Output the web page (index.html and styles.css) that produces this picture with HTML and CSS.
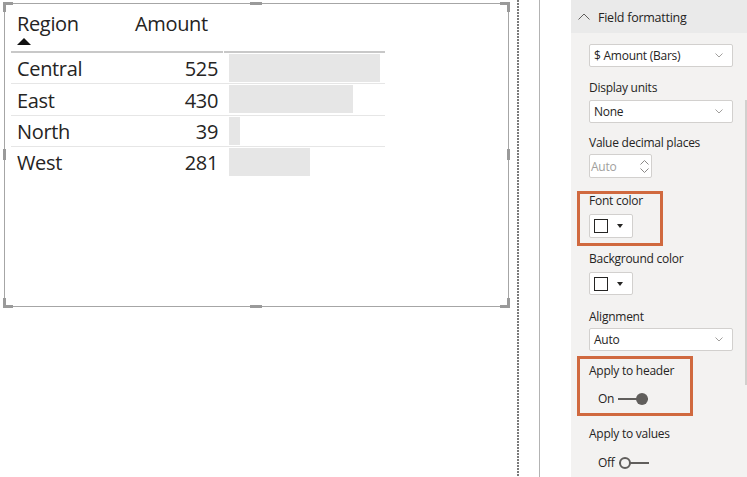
FILE: index.html
```html
<!DOCTYPE html>
<html>
<head>
<meta charset="utf-8">
<link rel="stylesheet" href="styles.css">
</head>
<body>
<div class="page">
  <div class="canvas">
    <div class="visual">
      <span class="h h-tl"></span><span class="h h-tr"></span><span class="h h-bl"></span><span class="h h-br"></span>
      <span class="m m-t"></span><span class="m m-b"></span><span class="m m-l"></span><span class="m m-r"></span>
      <div class="table">
        <div class="th c1"><span>Region</span><span class="sort"></span></div>
        <div class="th c2"><span>Amount</span></div>
        <div class="th c3"></div>

        <div class="td c1">Central</div>
        <div class="td c2">525</div>
        <div class="td c3"><div class="bar" style="width:151px"></div></div>

        <div class="td c1 tall">East</div>
        <div class="td c2 tall">430</div>
        <div class="td c3 tall"><div class="bar" style="width:124px"></div></div>

        <div class="td c1">North</div>
        <div class="td c2">39</div>
        <div class="td c3"><div class="bar" style="width:11px"></div></div>

        <div class="td c1 last">West</div>
        <div class="td c2 last">281</div>
        <div class="td c3 last"><div class="bar" style="width:81px"></div></div>
      </div>
    </div>
  </div>
  <div class="dots"></div>
  <div class="gap1"></div>
  <div class="vline"></div>
  <div class="gap2"></div>
  <div class="panel">
    <div class="phead">
      <svg class="chev-up" width="12" height="7" viewBox="0 0 12 7"><polyline points="0.5,6.5 6,1 11.5,6.5" fill="none" stroke="#605e5c" stroke-width="1"/></svg>
      <span>Field formatting</span>
    </div>
    <div class="pbody">
      <div class="select s1"><span>$ Amount (Bars)</span><svg width="8" height="5" viewBox="0 0 8 5"><polyline points="0.5,0.5 4,4 7.5,0.5" fill="none" stroke="#a19f9d" stroke-width="1"/></svg></div>
      <div class="label l1">Display units</div>
      <div class="select s2"><span>None</span><svg width="8" height="5" viewBox="0 0 8 5"><polyline points="0.5,0.5 4,4 7.5,0.5" fill="none" stroke="#a19f9d" stroke-width="1"/></svg></div>
      <div class="label l2">Value decimal places</div>
      <div class="spin"><span>Auto</span>
        <div class="arrows">
          <svg width="9" height="5" viewBox="0 0 9 5"><polyline points="0.5,4.5 4.5,0.5 8.5,4.5" fill="none" stroke="#8a8886" stroke-width="1"/></svg>
          <svg width="9" height="5" viewBox="0 0 9 5"><polyline points="0.5,0.5 4.5,4.5 8.5,0.5" fill="none" stroke="#8a8886" stroke-width="1"/></svg>
        </div>
      </div>
      <div class="label l3">Font color</div>
      <div class="picker p1"><span class="swatch"></span><span class="tri"></span></div>
      <div class="label l4">Background color</div>
      <div class="picker p2"><span class="swatch"></span><span class="tri"></span></div>
      <div class="label l5">Alignment</div>
      <div class="select s3"><span>Auto</span><svg width="8" height="5" viewBox="0 0 8 5"><polyline points="0.5,0.5 4,4 7.5,0.5" fill="none" stroke="#a19f9d" stroke-width="1"/></svg></div>
      <div class="label l6">Apply to header</div>
      <div class="toggle t1"><span>On</span><span class="track on"><span class="knob"></span></span></div>
      <div class="label l7">Apply to values</div>
      <div class="toggle t2"><span>Off</span><span class="track off"><span class="knob"></span></span></div>
    </div>
    <div class="hl hl1"></div>
    <div class="hl hl2"></div>
    <div class="scroll"></div>
  </div>
</div>
</body>
</html>
```
FILE: styles.css
```css
* { box-sizing: border-box; }
html, body { margin: 0; padding: 0; background: #ffffff; }
body { width: 747px; height: 477px; overflow: hidden; font-family: "Open Sans", "Segoe UI", sans-serif; color: #252423; }
.page { display: flex; height: 477px; }

.canvas { width: 517px; flex: none; }
.visual {
  position: relative;
  margin: 3px 0 0 4px;
  width: 505px;
  height: 304px;
  border: 1px solid #a6a6a6;
}
.h { position: absolute; width: 10px; height: 10px; border: 0 solid #9a9a9a; }
.h-tl { left: -2px; top: -2px; border-top-width: 3px; border-left-width: 3px; }
.h-tr { right: -2px; top: -2px; border-top-width: 3px; border-right-width: 3px; }
.h-bl { left: -2px; bottom: -2px; border-bottom-width: 3px; border-left-width: 3px; }
.h-br { right: -2px; bottom: -2px; border-bottom-width: 3px; border-right-width: 3px; }
.m { position: absolute; background: #9a9a9a; }
.m-t { top: -2px; left: 245px; width: 12px; height: 3px; }
.m-b { bottom: -2px; left: 245px; width: 12px; height: 3px; }
.m-l { left: -2px; top: 145px; width: 3px; height: 11px; }
.m-r { right: -2px; top: 145px; width: 3px; height: 11px; }

.table {
  margin: 0 0 0 6px;
  display: grid;
  grid-template-columns: 118px 94px 162px;
  width: 374px;
  font-size: 20px;
  letter-spacing: -0.35px;
}
.th {
  height: 49px;
  border-bottom: 2px solid #c8c8c8;
  padding: 6px 0 0 6px;
  line-height: 27px;
  display: flex;
  flex-direction: column;
  align-items: flex-start;
}
.th.c3 { margin-left: 1px; }
.sort {
  width: 0; height: 0;
  margin-top: 1px;
  border-left: 7px solid transparent;
  border-right: 7px solid transparent;
  border-bottom: 7px solid #111;
}
.td {
  height: 31px;
  border-bottom: 1px solid #e6e6e6;
  line-height: 30px;
  padding: 1px 6px 0;
  white-space: nowrap;
}
.td.tall { height: 32px; line-height: 31px; }
.td.last { border-bottom: none; }
.td.c2 { text-align: right; padding-right: 5px; }
.td.c3 { padding: 1px 0 0 6px; }
.bar { height: 28px; background: #e6e6e6; }

.dots {
  width: 2px; flex: none;
  background: repeating-linear-gradient(to bottom, #7a7a7a 0 2px, transparent 2px 3px);
}
.gap1 { width: 20px; flex: none; }
.vline { width: 1px; flex: none; background: #b3b3b3; }
.gap2 { width: 31px; flex: none; }

.panel {
  position: relative;
  width: 176px; flex: none;
  background: #f3f2f1;
  font-size: 12px;
  letter-spacing: -0.25px;
}
.phead {
  height: 33px;
  background: #eaeaea;
  display: flex;
  align-items: center;
  padding-left: 7px;
  padding-top: 2px;
  gap: 8px;
  font-size: 12.5px;
}
.phead svg { position: relative; top: -1px; }
.pbody { padding-left: 18px; display: flex; flex-direction: column; align-items: flex-start; }

.label { line-height: 16px; height: 16px; white-space: nowrap; }
.select {
  width: 144px; height: 23px;
  background: #fff;
  border: 1px solid #d2d0ce;
  border-radius: 2px;
  display: flex; align-items: center; justify-content: space-between;
  padding: 0 9px 0 4px;
  line-height: 16px;
}
.select svg { display: block; }
.s1 { margin-top: 11px; }
.l1 { margin-top: 13px; }
.s2 { margin-top: 4px; }
.l2 { margin-top: 12px; }
.spin {
  margin-top: 3px;
  width: 63px; height: 24px;
  background: #fff;
  border: 1px solid #d2d0ce;
  border-radius: 2px;
  display: flex; align-items: center; justify-content: space-between;
  padding: 0 2px 0 1px;
  color: #a19f9d;
}
.arrows { display: flex; flex-direction: column; gap: 3px; }
.arrows svg { display: block; }
.l3 { margin-top: 15px; }
.picker {
  width: 44px; height: 24px;
  background: #fff;
  border: 1px solid #d2d0ce;
  border-radius: 2px;
  display: flex; align-items: center;
  padding-left: 4px;
  gap: 9px;
}
.p1 { margin-top: 5px; }
.swatch { width: 14px; height: 14px; border: 1px solid #252423; background: #fff; }
.tri { width: 0; height: 0; border-left: 3.5px solid transparent; border-right: 3.5px solid transparent; border-top: 4px solid #252423; }
.l4 { margin-top: 13px; }
.p2 { margin-top: 5px; height: 23px; }
.l5 { margin-top: 14px; }
.s3 { margin-top: 3px; }
.l6 { margin-top: 12px; }
.toggle { display: flex; align-items: center; height: 16px; line-height: 16px; padding-left: 9px; }
.t1 { margin-top: 12px; }
.l7 { margin-top: 19px; }
.t2 { margin-top: 13px; }
.track { position: relative; display: block; height: 2px; background: #605e5c; }
.track.on { width: 30px; margin-left: 4px; }
.track.on .knob { position: absolute; right: 0; top: -5px; width: 12px; height: 12px; border-radius: 50%; background: #605e5c; }
.track.off { width: 30px; margin-left: 4px; }
.track.off .knob { position: absolute; left: 0; top: -5px; width: 12px; height: 12px; border-radius: 50%; background: #f3f2f1; border: 2px solid #605e5c; }

.hl { position: absolute; border: 3px solid #d0693f; }
.hl1 { left: 6px; top: 191px; width: 86px; height: 55px; }
.hl2 { left: 6px; top: 356px; width: 116px; height: 60px; }
.scroll { position: absolute; right: 0; top: 100px; width: 2px; height: 285px; background: #d2d0ce; }
```
